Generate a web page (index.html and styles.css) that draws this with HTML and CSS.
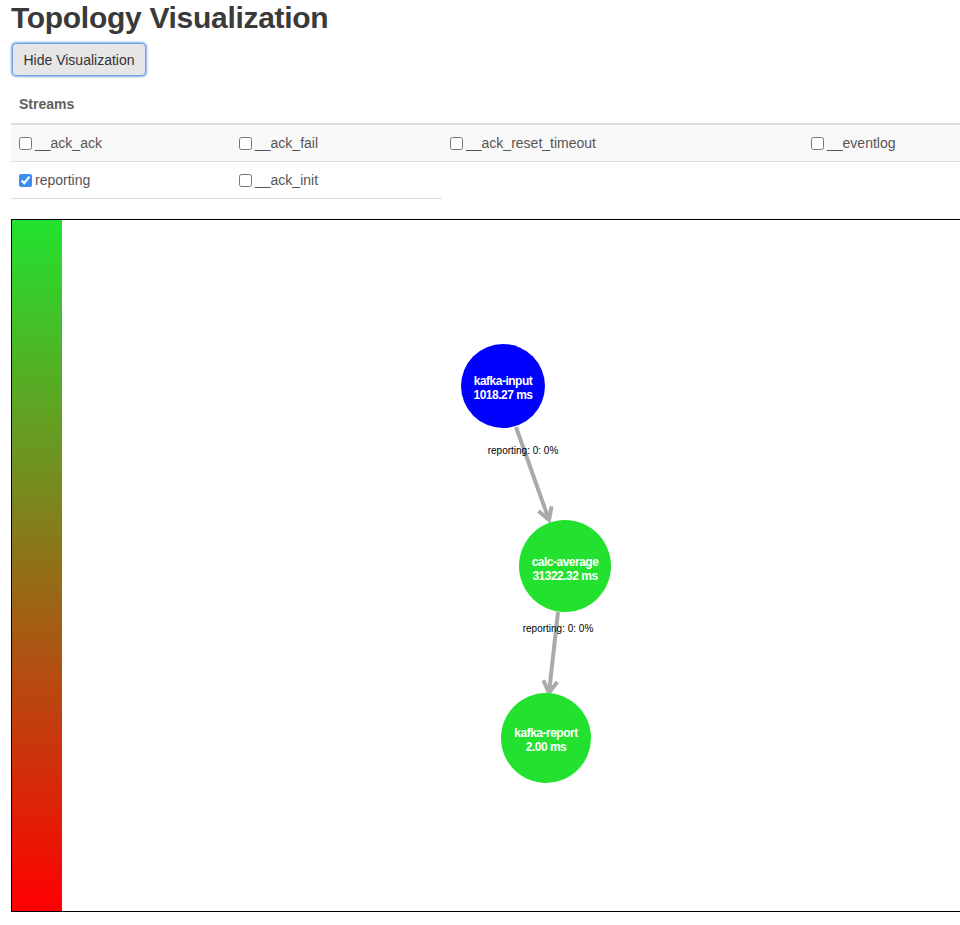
FILE: index.html
```html
<!DOCTYPE html>
<html>
<head>
<meta charset="utf-8">
<title>Topology Visualization</title>
<link rel="stylesheet" href="styles.css">
</head>
<body>
<h1 class="title">Topology Visualization</h1>
<button class="btn" type="button">Hide Visualization</button>
<div class="streams">
  <div class="streams-head">Streams</div>
  <div class="row row-odd">
    <label class="cell c1"><input type="checkbox"><span>__ack_ack</span></label>
    <label class="cell c2"><input type="checkbox"><span>__ack_fail</span></label>
    <label class="cell c3"><input type="checkbox"><span>__ack_reset_timeout</span></label>
    <label class="cell c4"><input type="checkbox"><span>__eventlog</span></label>
  </div>
  <div class="row row-even">
    <label class="cell c1"><input type="checkbox" checked><span>reporting</span></label>
    <label class="cell c2"><input type="checkbox"><span>__ack_init</span></label>
  </div>
</div>
<div class="viz">
  <div class="legend"></div>
  <svg class="graph" width="898" height="691" viewBox="0 0 898 691" xmlns="http://www.w3.org/2000/svg">
    <g class="edge">
      <line x1="454" y1="207" x2="487" y2="300"/>
      <polyline points="476.4,291 487,300 489.6,286.4"/>
      <line x1="496" y1="392" x2="487" y2="473"/>
      <polyline points="481.4,460.3 487,473 495.3,461.9"/>
    </g>
    <text class="elabel" x="461" y="234">reporting: 0: 0%</text>
    <text class="elabel" x="496" y="412">reporting: 0: 0%</text>
    <circle cx="441" cy="166" r="42" fill="#0000ff"/>
    <text class="nlabel" x="441" y="165">kafka-input</text>
    <text class="nlabel" x="441" y="179">1018.27 ms</text>
    <circle cx="503" cy="346" r="46" fill="#22e22f"/>
    <text class="nlabel" x="503" y="346">calc-average</text>
    <text class="nlabel" x="503" y="360">31322.32 ms</text>
    <circle cx="484" cy="518" r="45" fill="#22e22f"/>
    <text class="nlabel" x="484" y="517">kafka-report</text>
    <text class="nlabel" x="484" y="531">2.00 ms</text>
  </svg>
</div>
</body>
</html>
```
FILE: styles.css
```css
html, body {
  margin: 0;
  padding: 0;
  background: #fff;
}
body {
  padding: 0 0 0 11px;
  font-family: "Liberation Sans", Arial, sans-serif;
  font-size: 14px;
  color: #333;
}
.title {
  margin: 0 0 9px 0;
  padding-top: 1px;
  font-size: 30px;
  line-height: 33px;
  font-weight: bold;
  letter-spacing: -0.3px;
  color: #3a3a3a;
}
.btn {
  display: block;
  margin: 0 0 0 1px;
  width: 134px;
  height: 33px;
  padding: 0;
  font-family: "Liberation Sans", Arial, sans-serif;
  font-size: 14px;
  color: #333;
  background: #e6e6e6;
  border: 1px solid #6fa3e6;
  border-radius: 4px;
  box-shadow: 0 0 2px 1px rgba(90, 150, 235, 0.75);
}
.streams {
  margin-top: 10px;
}
.streams-head {
  height: 37px;
  line-height: 36px;
  padding-left: 8px;
  font-weight: bold;
  color: #5e5e5e;
  border-bottom: 2px solid #ddd;
}
.row {
  display: flex;
  height: 36px;
}
.row-odd {
  background: #f9f9f9;
  border-bottom: 1px solid #ddd;
}
.cell {
  display: flex;
  align-items: center;
  padding-left: 8px;
  box-sizing: border-box;
  color: #555;
  white-space: nowrap;
}
.row-even .cell {
  border-bottom: 1px solid #ddd;
  height: 37px;
}
.c1 { width: 220px; }
.c2 { width: 211px; }
.c3 { width: 361px; }
.c4 { flex: 1; }
.cell input {
  margin: 0 3px 0 0;
  width: 13px;
  height: 13px;
  accent-color: #3b8ef2;
}
.viz {
  margin-top: 21px;
  display: flex;
  height: 691px;
  border: 1px solid #000;
  border-right: none;
}
.legend {
  width: 50px;
  flex: none;
  background: linear-gradient(#22e22f, #ff0000);
}
.graph {
  display: block;
  flex: none;
}
.edge line, .edge polyline {
  stroke: #aaaaaa;
  stroke-width: 4;
  fill: none;
  stroke-linecap: butt;
}
.elabel {
  font-family: "Liberation Sans", Arial, sans-serif;
  font-size: 10px;
  fill: #000;
  text-anchor: middle;
}
.nlabel {
  font-family: "Liberation Sans", Arial, sans-serif;
  font-size: 12px;
  font-weight: bold;
  letter-spacing: -0.5px;
  fill: #fff;
  text-anchor: middle;
}
```
